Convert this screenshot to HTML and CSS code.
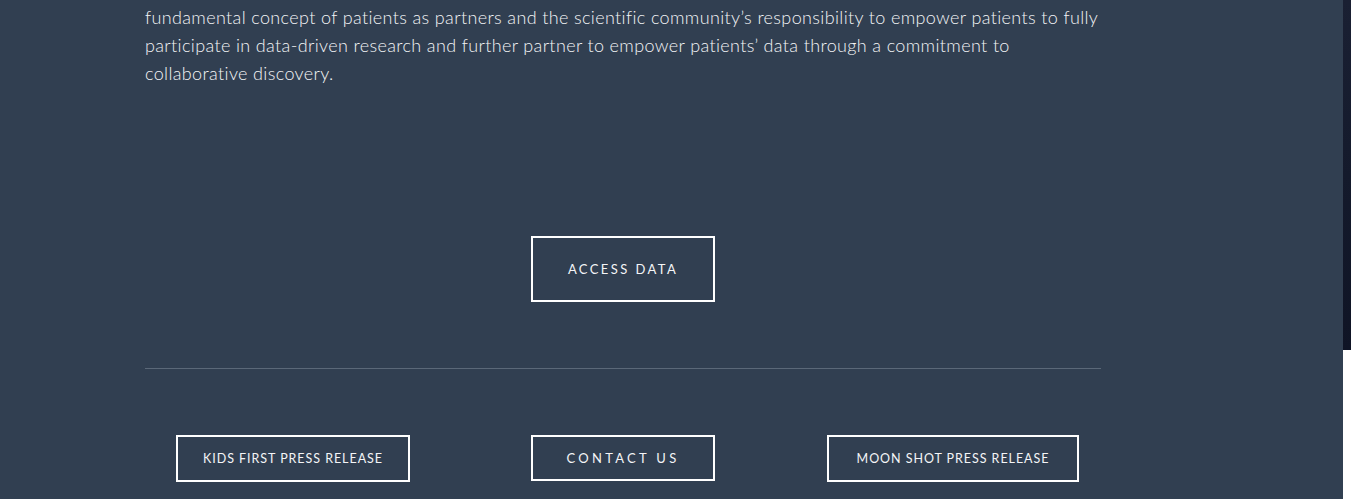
FILE: index.html
```html
<!DOCTYPE html>
<html lang="en">
<head>
<meta charset="utf-8">
<title>Data</title>
<link rel="stylesheet" href="styles.css">
</head>
<body>
<div class="page">
  <main class="main">
    <div class="container">
      <p class="intro">fundamental concept of patients as partners and the scientific community’s responsibility to empower patients to fully participate in data-driven research and further partner to empower patients’ data through a commitment to collaborative discovery.</p>
      <div class="cta">
        <a class="btn btn-lg" href="#">ACCESS DATA</a>
      </div>
      <hr class="rule">
      <div class="links">
        <div class="col"><a class="btn btn-sm btn-kids" href="#">KIDS FIRST PRESS RELEASE</a></div>
        <div class="col"><a class="btn btn-wide" href="#">CONTACT US</a></div>
        <div class="col"><a class="btn btn-sm btn-moon" href="#">MOON SHOT PRESS RELEASE</a></div>
      </div>
    </div>
  </main>
  <aside class="side">
    <div class="side-dark"></div>
  </aside>
</div>
</body>
</html>
```

FILE: styles.css
```css
html, body {
  margin: 0;
  padding: 0;
  height: 100%;
  overflow: hidden;
}
body {
  font-family: Lato, "Noto Sans", sans-serif;
  color: #f3f4f6;
  background: #ffffff;
}
.page {
  display: flex;
  height: 499px;
}
.main {
  width: 1343px;
  flex: none;
  background: #313f51;
}
.side {
  flex: 1;
  background: #ffffff;
}
.side-dark {
  height: 350px;
  background: linear-gradient(180deg, #1a2033 0%, #141a2c 50%, #0f1425 100%);
}
.container {
  width: 956px;
  margin-left: 145px;
  padding-top: 3px;
}
.intro {
  margin: 0;
  font-size: 18px;
  font-weight: 300;
  line-height: 28px;
  letter-spacing: 0.36px;
}
.cta {
  display: flex;
  justify-content: center;
  margin-top: 149px;
}
.btn {
  display: inline-flex;
  align-items: center;
  justify-content: center;
  box-sizing: border-box;
  border: 2px solid #ffffff;
  color: #f4f5f7;
  text-decoration: none;
  font-weight: 400;
}
.btn-lg {
  width: 184px;
  height: 66px;
  font-size: 13px;
  letter-spacing: 2.4px;
}
.rule {
  margin: 66px 0 0;
  border: 0;
  height: 1px;
  background: #5b6878;
}
.links {
  display: grid;
  grid-template-columns: repeat(3, 1fr);
  margin: 66px -17px 0;
}
.col {
  display: flex;
  justify-content: center;
}
.btn-sm {
  height: 47px;
  font-size: 12.5px;
  letter-spacing: 0.95px;
}
.btn-kids {
  width: 234px;
}
.btn-moon {
  width: 252px;
}
.btn-wide {
  width: 184px;
  height: 46px;
  font-size: 13px;
  letter-spacing: 3.3px;
}
```
